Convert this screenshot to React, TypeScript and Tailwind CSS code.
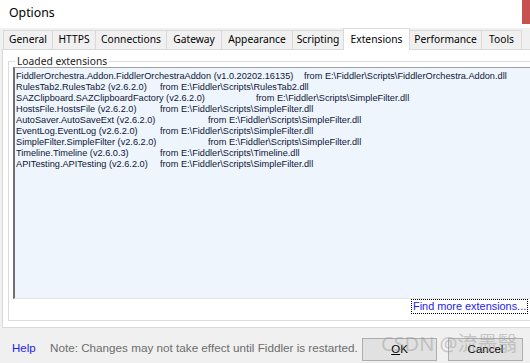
const tabs = [
  { label: "General", width: "w-[49px]" },
  { label: "HTTPS", width: "w-[43px]" },
  { label: "Connections", width: "w-[71px]" },
  { label: "Gateway", width: "w-[55px]" },
  { label: "Appearance", width: "w-[71px]" },
  { label: "Scripting", width: "w-[51px]" },
  { label: "Extensions", width: "w-[67px]", active: true },
  { label: "Performance", width: "w-[72px]" },
  { label: "Tools", width: "w-[41px]" }
];

const extensions = [
  { name: "FiddlerOrchestra.Addon.FiddlerOrchestraAddon (v1.0.20202.16135)", file: "FiddlerOrchestra.Addon.dll", column: "w-[288px]" },
  { name: "RulesTab2.RulesTab2 (v2.6.2.0)", file: "RulesTab2.dll", column: "w-[144px]" },
  { name: "SAZClipboard.SAZClipboardFactory (v2.6.2.0)", file: "SimpleFilter.dll", column: "w-[240px]" },
  { name: "HostsFile.HostsFile (v2.6.2.0)", file: "SimpleFilter.dll", column: "w-[144px]" },
  { name: "AutoSaver.AutoSaveExt (v2.6.2.0)", file: "SimpleFilter.dll", column: "w-[192px]" },
  { name: "EventLog.EventLog (v2.6.2.0)", file: "SimpleFilter.dll", column: "w-[144px]" },
  { name: "SimpleFilter.SimpleFilter (v2.6.2.0)", file: "SimpleFilter.dll", column: "w-[192px]" },
  { name: "Timeline.Timeline (v2.6.0.3)", file: "Timeline.dll", column: "w-[144px]" },
  { name: "APITesting.APITesting (v2.6.2.0)", file: "SimpleFilter.dll", column: "w-[144px]" }
];

export default function App() {
  return (
    <div className="relative flex h-[363px] w-[530px] flex-col overflow-hidden bg-[#f0f0f0] font-['Noto_Sans',sans-serif] text-[#1a1a1a]">
      {/* title bar */}
      <div className="flex h-[28px] shrink-0 bg-white">
        <span className="pl-[9px] pt-[4px] text-[12.3px] leading-[18px] text-black">Options</span>
        <span className="ml-auto h-[24px] w-[8px] bg-[#c75050]" aria-hidden="true" />
      </div>

      {/* tab strip */}
      <div className="flex h-[21px] shrink-0 items-end pl-[3px]">
        {tabs.map((tab) => (
          <div
            key={tab.label}
            className={
              tab.active
                ? `relative z-10 -mb-px -mr-px flex h-[22px] shrink-0 items-center justify-center border border-b-0 border-[#d9d9d9] bg-white text-[10.25px] text-black ${tab.width}`
                : `flex h-[19px] shrink-0 items-center justify-center border-t border-l border-[#d9d9d9] text-[10.25px] text-black last:border-r ${tab.width}`
            }
          >
            {tab.label}
          </div>
        ))}
      </div>

      {/* tab page */}
      <div className="ml-[2px] flex h-[279px] w-[560px] shrink-0 flex-col border border-[#d9d9d9] bg-white pl-[5px] pt-[5px]">
        <fieldset className="flex h-[266px] w-[540px] flex-col border border-[#dcdcdc]">
          <legend className="ml-[6px] px-[2px] text-[10.25px] leading-[12px] text-[#222]">Loaded extensions</legend>
          <div className="ml-[4px] h-[232px] border-t border-l-2 border-b border-t-[#a0a0a0] border-l-[#707070] border-b-[#e3e3e3] bg-[#eef5fd] pl-[1px] pt-[3px] font-['Liberation_Sans',Arial,sans-serif] text-[9.2px] leading-[11px] text-[#0e1636]">
            {extensions.map((ext) => (
              <div key={ext.name} className="flex whitespace-nowrap">
                <span className={`shrink-0 ${ext.column}`}>{ext.name}</span>
                <span>from E:\Fiddler\Scripts\{ext.file}</span>
              </div>
            ))}
          </div>
          <div className="flex">
            <span className="ml-[402px] whitespace-nowrap border border-dotted border-black px-px font-['Liberation_Sans',Arial,sans-serif] text-[10.9px] leading-[13px] text-[#1c1cf0]">
              Find more extensions...
            </span>
          </div>
        </fieldset>
      </div>

      {/* footer */}
      <div className="flex h-[35px] shrink-0 items-start font-['Liberation_Sans',Arial,sans-serif]">
        <span className="w-[50px] shrink-0 pl-[12px] pt-[14px] text-[11.5px] leading-[12px] text-[#1c1cf0]">Help</span>
        <span className="w-[312px] shrink-0 whitespace-nowrap pt-[14px] text-[11.7px] leading-[12px] text-[#6d6d6d]">
          Note: Changes may not take effect until Fiddler is restarted.
        </span>
        <button className="mt-[10px] flex h-[23px] w-[75px] shrink-0 items-center justify-center border border-[#adadad] bg-[#e1e1e1] text-[11.5px] text-black">
          <span className="underline">O</span>K
        </button>
        <button className="ml-[11px] mt-[10px] flex h-[23px] w-[75px] shrink-0 items-center justify-center border border-[#adadad] bg-[#e1e1e1] text-[11.5px] text-black">
          Cancel
        </button>
      </div>

      {/* watermark */}
      <div className="pointer-events-none absolute left-[381px] top-[331px] whitespace-nowrap font-['Noto_Sans','Noto_Sans_CJK_SC',sans-serif] text-[20px] leading-[26px] text-[rgba(150,150,150,0.45)]">
        CSDN @流墨翳
      </div>
    </div>
  );
}
